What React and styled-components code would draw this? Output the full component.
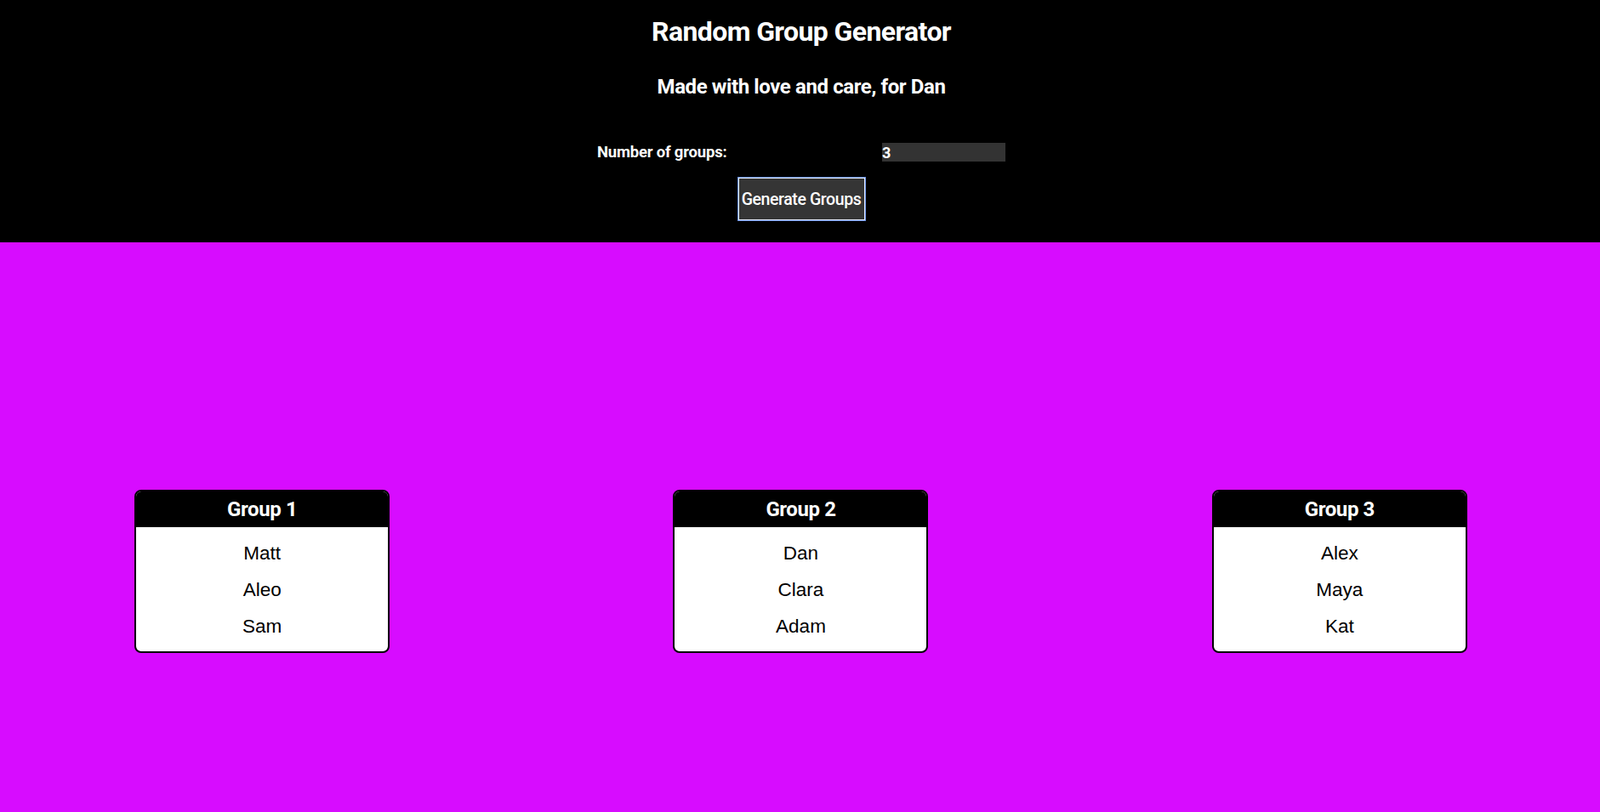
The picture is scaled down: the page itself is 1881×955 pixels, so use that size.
import { useState } from "react";
import styled, { createGlobalStyle } from "styled-components";

const GlobalStyle = createGlobalStyle`
  html, body {
    margin: 0;
    padding: 0;
  }
  body {
    background: #d70cff;
    font-family: "Liberation Sans", Arial, sans-serif;
  }
  * {
    box-sizing: border-box;
  }
`;

const Header = styled.header`
  background: #000;
  color: #fff;
  text-align: center;
  padding: 18px 0 26px 3px;
  font-family: Roboto, "Liberation Sans", sans-serif;
`;

const Title = styled.h1`
  margin: 0;
  font-size: 32px;
  line-height: 38px;
  font-weight: 700;
  letter-spacing: -0.6px;
`;

const Subtitle = styled.h2`
  margin: 32px 0 0;
  font-size: 24px;
  line-height: 28px;
  font-weight: 700;
  letter-spacing: -0.4px;
`;

const FormRow = styled.div`
  width: 480px;
  margin: 52px auto 0;
  display: flex;
  justify-content: space-between;
  align-items: center;
`;

const Label = styled.label`
  font-size: 18.5px;
  font-weight: 700;
  letter-spacing: -0.2px;
`;

const NumberInput = styled.input`
  width: 145px;
  height: 22px;
  border: none;
  padding: 0;
  background: #333;
  color: #fff;
  font-family: Roboto, "Liberation Sans", sans-serif;
  font-size: 18px;
  font-weight: 700;
  outline: none;
  -moz-appearance: textfield;
  &::-webkit-inner-spin-button,
  &::-webkit-outer-spin-button {
    -webkit-appearance: none;
    margin: 0;
  }
`;

const GenerateButton = styled.button`
  display: block;
  margin: 19px auto 0;
  width: 149px;
  height: 50px;
  padding: 0;
  background: #353535;
  color: #fff;
  border: 1px solid #e4ecff;
  box-shadow: 0 0 0 1px #6890e6;
  font-family: Roboto, "Liberation Sans", sans-serif;
  font-size: 19.5px;
  font-weight: 500;
  letter-spacing: -0.4px;
  cursor: pointer;
`;

const Groups = styled.main`
  display: grid;
  grid-template-columns: repeat(3, 1fr);
  gap: 21px;
  justify-items: center;
  padding: 291px 0 0 2px;
`;

const Card = styled.section`
  width: 300px;
  background: #fff;
  border: 2px solid #000;
  border-radius: 8px;
  overflow: hidden;
`;

const CardHeader = styled.h3`
  margin: 0;
  height: 42px;
  line-height: 42px;
  background: #000;
  color: #fff;
  text-align: center;
  font-family: Roboto, "Liberation Sans", sans-serif;
  font-size: 24px;
  font-weight: 700;
  letter-spacing: -0.4px;
`;

const NameList = styled.ul`
  list-style: none;
  margin: 0;
  padding: 9px 0 8px;
`;

const Name = styled.li`
  text-align: center;
  font-size: 22.5px;
  line-height: 43px;
  color: #000;
`;

const initialGroups = [
  ["Matt", "Aleo", "Sam"],
  ["Dan", "Clara", "Adam"],
  ["Alex", "Maya", "Kat"],
];

function shuffle(list) {
  const copy = [...list];
  for (let i = copy.length - 1; i > 0; i--) {
    const j = Math.floor(Math.random() * (i + 1));
    [copy[i], copy[j]] = [copy[j], copy[i]];
  }
  return copy;
}

export default function App() {
  const [count, setCount] = useState(3);
  const [groups, setGroups] = useState(initialGroups);

  const generate = () => {
    const people = shuffle(initialGroups.flat());
    const n = Math.max(1, Number(count) || 1);
    const next = Array.from({ length: n }, () => []);
    people.forEach((p, i) => next[i % n].push(p));
    setGroups(next);
  };

  return (
    <>
      <GlobalStyle />
      <Header>
        <Title>Random Group Generator</Title>
        <Subtitle>Made with love and care, for Dan</Subtitle>
        <FormRow>
          <Label htmlFor="groups">Number of groups:</Label>
          <NumberInput
            id="groups"
            type="number"
            value={count}
            onChange={e => setCount(e.target.value)}
          />
        </FormRow>
        <GenerateButton onClick={generate}>Generate Groups</GenerateButton>
      </Header>
      <Groups>
        {groups.map((g, i) => (
          <Card key={i}>
            <CardHeader>Group {i + 1}</CardHeader>
            <NameList>
              {g.map((name, idx) => (
                <Name key={idx}>{name}</Name>
              ))}
            </NameList>
          </Card>
        ))}
      </Groups>
    </>
  );
}
